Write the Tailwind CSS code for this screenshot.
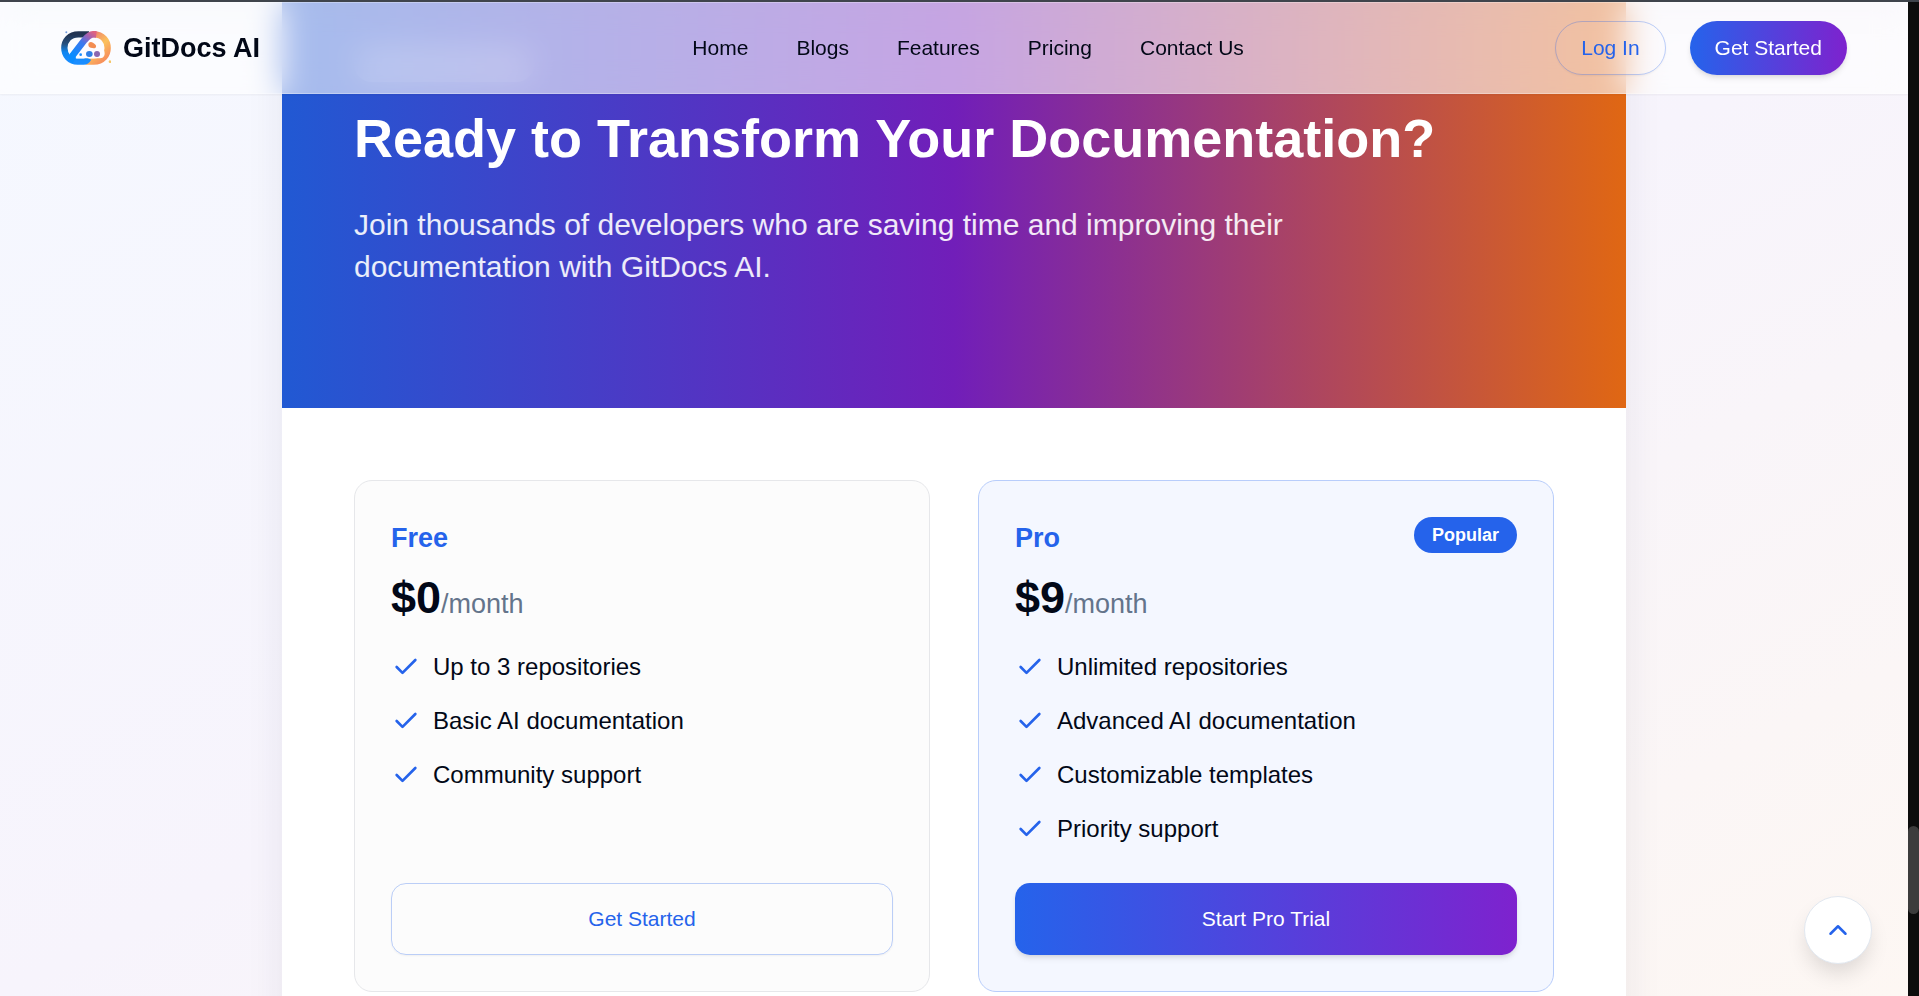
<!DOCTYPE html>
<html lang="en">
<head>
<meta charset="utf-8">
<meta name="viewport" content="width=device-width, initial-scale=1">
<title>GitDocs AI</title>
<script src="https://cdn.jsdelivr.net/npm/@tailwindcss/browser@4"></script>
</head>
<body class="flex h-screen flex-col overflow-hidden border-t-2 border-[#3f444c] bg-[#0c0c0c] font-['Liberation_Sans',Arial,sans-serif] text-[#020817]">
<svg class="hidden" aria-hidden="true">
  <symbol id="check" viewBox="0 0 24 24"><path d="M20 6 9 17l-5-5" fill="none" stroke="currentColor" stroke-width="2.3" stroke-linecap="round" stroke-linejoin="round"/></symbol>
</svg>
<div class="flex min-h-0 flex-1">
  <div class="relative min-w-0 flex-1 overflow-hidden bg-linear-to-br/srgb from-[#f5f8ff] via-[#f7f4fc] to-[#fdf7f3]">

    <header class="absolute inset-x-0 top-0 z-10 border-y border-white/30 bg-white/60 shadow-xs backdrop-blur-lg">
      <div class="flex h-[90px] items-center justify-between px-[61px]">
        <a href="#" class="flex w-80 shrink-0 items-center gap-3 text-[27px] font-bold">
          <svg class="h-[34px] w-[50px]" viewBox="0 0 150 102" fill="none" aria-hidden="true">
            <defs>
              <linearGradient id="navy" x1="0" y1="0" x2="0" y2="1"><stop offset="0" stop-color="#223452"/><stop offset=".35" stop-color="#25507f"/><stop offset=".65" stop-color="#0f86f0"/><stop offset="1" stop-color="#1a8dff"/></linearGradient>
              <linearGradient id="amber" x1="0" y1="0" x2=".7" y2="1"><stop offset="0" stop-color="#e2617f"/><stop offset=".3" stop-color="#f39a66"/><stop offset=".6" stop-color="#fbc15c"/><stop offset="1" stop-color="#f7935d"/></linearGradient>
              <linearGradient id="band" gradientUnits="userSpaceOnUse" x1="104" y1="8" x2="45" y2="80"><stop offset="0" stop-color="#e0627f"/><stop offset=".22" stop-color="#a060b4"/><stop offset=".5" stop-color="#3d78ee"/><stop offset="1" stop-color="#0a8cff"/></linearGradient>
            </defs>
            <path d="M98 10C126 10 140 30 140 51S126 92 98 92H74" stroke="url(#amber)" stroke-width="19"/>
            <path d="M84 10H52C26 10 10 29 10 51S26 92 50 92H68C75 92 79 88 82 82" stroke="url(#navy)" stroke-width="19"/>
            <path d="M106 10C88 8 80 16 70 28L36 72C32 79 34 85 40 89" stroke="url(#band)" stroke-width="20"/>
            <path d="M46 82 86 32C92 23 107 23 114 32L124 48C136 66 132 82 116 82Z" fill="#fdfcff"/>
            <path d="M82 42C81 33 90 31 96 35S107 42 105 48 94 51 89 50 83 47 82 42Z" fill="#f38d52"/>
            <ellipse cx="85" cy="69" rx="10" ry="9" fill="#2f7fe6"/>
            <ellipse cx="108" cy="69" rx="9" ry="9" fill="#8b67b0"/>
            <circle cx="59" cy="71" r="4" fill="#1a8dff"/>
            <circle cx="16" cy="4" r="3" fill="#6f9ade"/>
            <circle cx="147" cy="92" r="4" fill="#f5c566"/>
          </svg>
          GitDocs AI
        </a>
        <nav class="flex gap-12 text-[21px]">
          <a href="#">Home</a>
          <a href="#">Blogs</a>
          <a href="#">Features</a>
          <a href="#">Pricing</a>
          <a href="#">Contact Us</a>
        </nav>
        <div class="flex gap-6 text-[21px]">
          <button class="h-[54px] rounded-full border border-[#2563eb]/30 px-[25px] text-[#2563eb] shadow-xs">Log In</button>
          <button class="h-[54px] rounded-full bg-linear-to-r/srgb from-[#2563eb] to-[#7e22ce] px-[25px] text-white shadow-md">Get Started</button>
        </div>
      </div>
    </header>

    <main class="mx-auto w-full max-w-[1344px] bg-white shadow-[0_24px_36px_rgba(40,40,80,0.08)]">
      <section class="bg-linear-to-r/srgb from-[#2159d3] via-[#711eb9] to-[#e06713] px-[72px] pt-11 pb-[120px] text-white">
        <div class="h-9 w-[180px] rounded-full bg-white/20"></div>
        <h2 class="mt-6 text-[54px] leading-[64px] font-bold">Ready to Transform Your Documentation?</h2>
        <p class="mt-[34px] max-w-[1008px] text-[30px] leading-[42px] text-white/90">Join thousands of developers who are saving time and improving their documentation with GitDocs AI.</p>
      </section>

      <section class="grid grid-cols-2 gap-12 p-[72px]">
        <article class="flex flex-col rounded-[18px] border border-[#e6e7ea] bg-[#fcfcfc] p-9">
          <h3 class="text-[27px] leading-[42px] font-bold text-[#2563eb]">Free</h3>
          <p class="mt-3 text-[45px] leading-[54px] font-bold">$0<span class="text-[27px] leading-none font-normal text-[#64748b]">/month</span></p>
          <ul class="mt-6 flex flex-col gap-[18px] text-2xl leading-9">
            <li class="flex items-center gap-3"><span class="flex w-[30px] justify-center text-[#2563eb]"><svg class="size-7"><use href="#check"/></svg></span>Up to 3 repositories</li>
            <li class="flex items-center gap-3"><span class="flex w-[30px] justify-center text-[#2563eb]"><svg class="size-7"><use href="#check"/></svg></span>Basic AI documentation</li>
            <li class="flex items-center gap-3"><span class="flex w-[30px] justify-center text-[#2563eb]"><svg class="size-7"><use href="#check"/></svg></span>Community support</li>
          </ul>
          <button class="mt-auto h-[72px] rounded-[15px] border border-[#2563eb]/30 text-[21px] text-[#2563eb] shadow-xs">Get Started</button>
        </article>

        <article class="flex flex-col rounded-[18px] border border-[#b8cdfb] bg-[#f4f7ff] p-9">
          <div class="flex items-start justify-between">
            <h3 class="text-[27px] leading-[42px] font-bold text-[#2563eb]">Pro</h3>
            <span class="rounded-full bg-[#2563eb] px-[18px] text-lg leading-9 font-bold text-white">Popular</span>
          </div>
          <p class="mt-3 text-[45px] leading-[54px] font-bold">$9<span class="text-[27px] leading-none font-normal text-[#64748b]">/month</span></p>
          <ul class="mt-6 flex flex-col gap-[18px] text-2xl leading-9">
            <li class="flex items-center gap-3"><span class="flex w-[30px] justify-center text-[#2563eb]"><svg class="size-7"><use href="#check"/></svg></span>Unlimited repositories</li>
            <li class="flex items-center gap-3"><span class="flex w-[30px] justify-center text-[#2563eb]"><svg class="size-7"><use href="#check"/></svg></span>Advanced AI documentation</li>
            <li class="flex items-center gap-3"><span class="flex w-[30px] justify-center text-[#2563eb]"><svg class="size-7"><use href="#check"/></svg></span>Customizable templates</li>
            <li class="flex items-center gap-3"><span class="flex w-[30px] justify-center text-[#2563eb]"><svg class="size-7"><use href="#check"/></svg></span>Priority support</li>
          </ul>
          <button class="mt-9 h-[72px] rounded-[15px] bg-linear-to-r/srgb from-[#2563eb] to-[#7e22ce] text-[21px] text-white shadow-md">Start Pro Trial</button>
        </article>
      </section>
    </main>

    <button aria-label="Back to top" class="absolute right-9 bottom-8 flex size-[68px] items-center justify-center rounded-full border border-[#e2e8f0] bg-white text-[#2563eb] shadow-[0_12px_22px_-4px_rgba(0,0,0,0.14)]">
      <svg class="size-[30px]" viewBox="0 0 24 24" fill="none" stroke="currentColor" stroke-width="2" stroke-linecap="round" stroke-linejoin="round"><path d="m18 15-6-6-6 6"/></svg>
    </button>
  </div>

  <div class="flex w-[11px] flex-col bg-[#0c0c0c]" aria-hidden="true">
    <div class="flex-[824]"></div>
    <div class="h-[88px] rounded-full bg-[#3c3c3c]"></div>
    <div class="flex-[82]"></div>
  </div>
</div>
</body>
</html>
